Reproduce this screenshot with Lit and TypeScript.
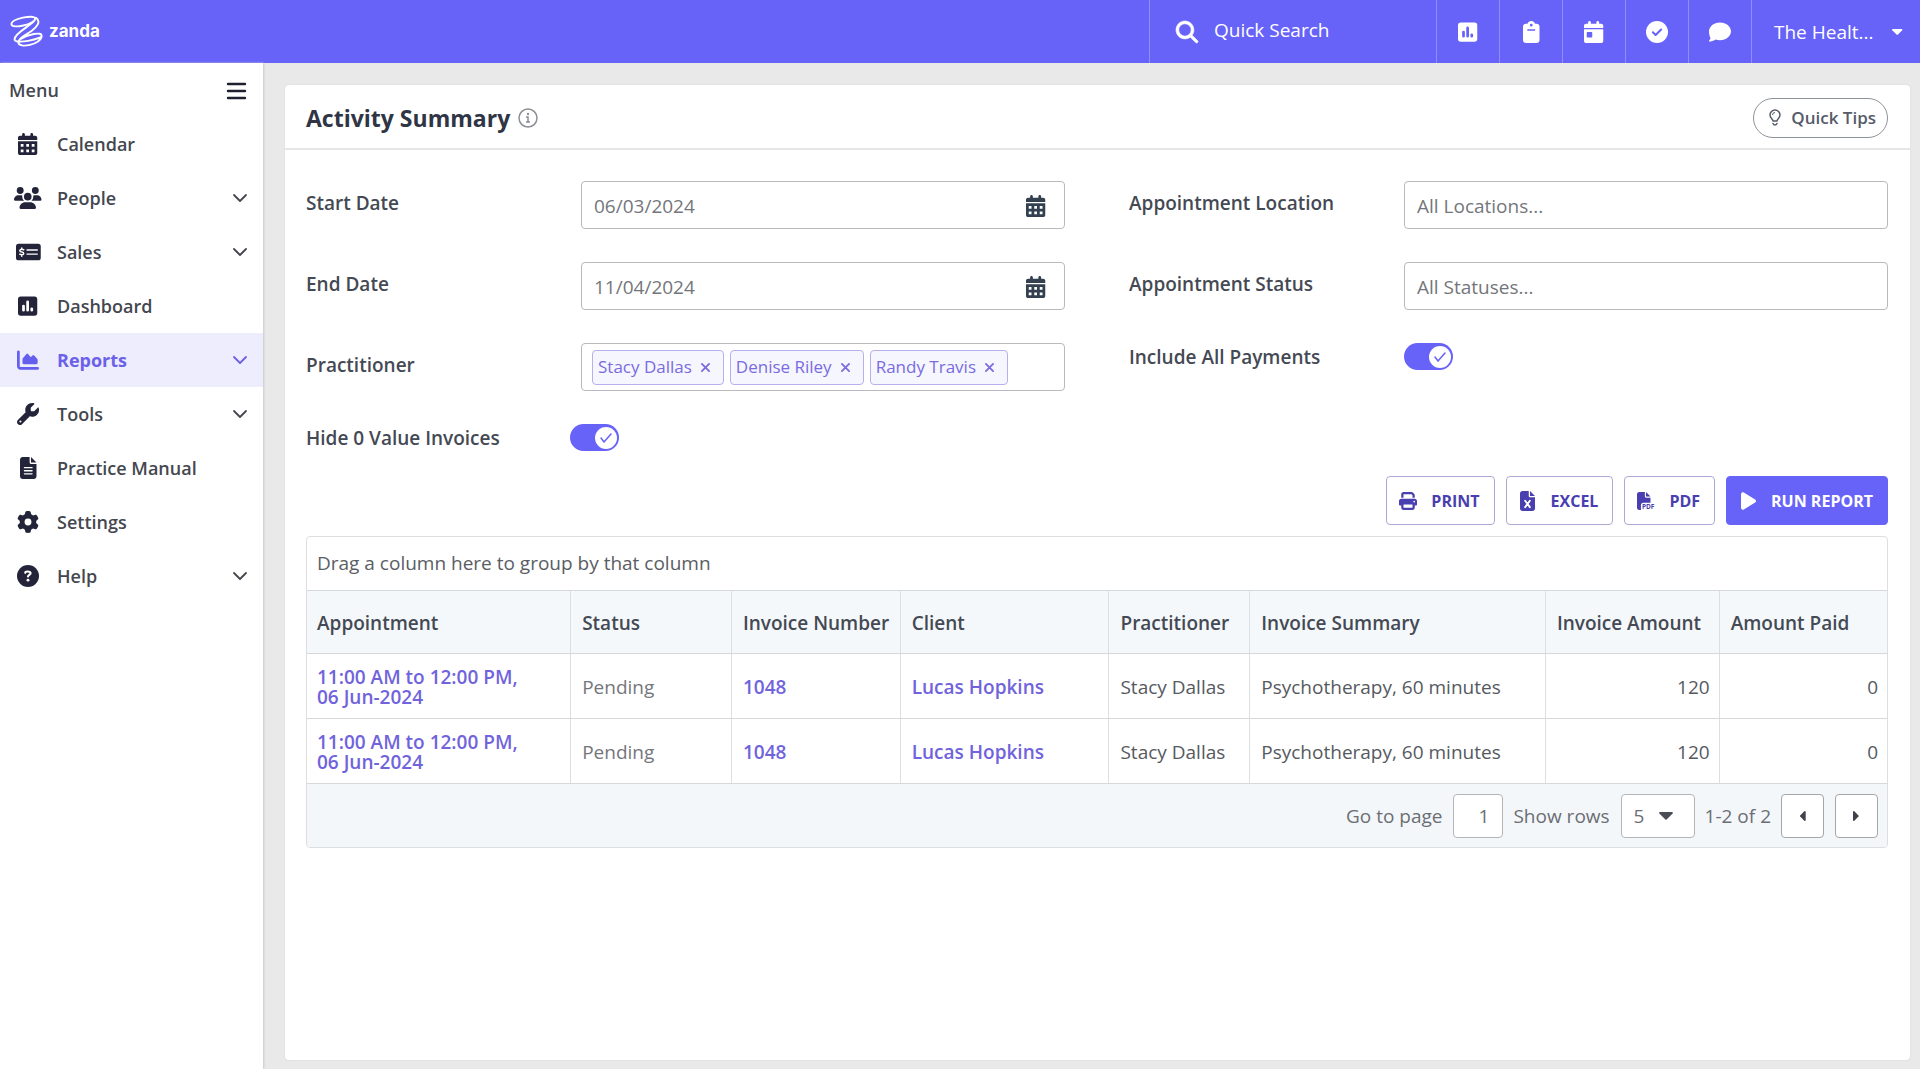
import { LitElement, html, css, svg, TemplateResult } from "lit";
import { customElement, property } from "lit/decorators.js";

const calendar = (holes: boolean) => svg`
  <path fill-rule="evenodd" d="M128 0c17.700 0 32 14.300 32 32V64H288V32c0-17.700 14.300-32 32-32s32 14.300 32 32V64h48c26.500 0 48 21.500 48 48v48H0V112C0 85.500 21.500 64 48 64H96V32c0-17.700 14.300-32 32-32zM0 192H448V464c0 26.500-21.500 48-48 48H48c-26.500 0-48-21.500-48-48V192z${
    holes
      ? "M64 256h64v64H64zM192 256h64v64h-64zM320 256h64v64h-64zM64 384h64v64H64zM192 384h64v64h-64zM320 384h64v64h-64z"
      : "M80 256h96a16 16 0 0 1 16 16v96a16 16 0 0 1-16 16H80a16 16 0 0 1-16-16v-96a16 16 0 0 1 16-16z"
  }"/>`;

interface Glyph {
  box: string;
  body: TemplateResult<2>;
}

const glyphs: Record<string, Glyph> = {
  calendar: { box: "0 0 448 512", body: calendar(true) },
  calendarDay: { box: "0 0 448 512", body: calendar(false) },
  people: {
    box: "0 0 640 512",
    body: svg`<circle cx="144" cy="80" r="80"/><circle cx="496" cy="80" r="80"/><circle cx="320" cy="224" r="88"/>
      <path d="M0 298.700C0 239.800 47.800 192 106.700 192h42.700c15.900 0 31 3.500 44.600 9.700-1.300 7.200-1.900 14.700-1.900 22.300 0 38.200 16.800 72.500 43.300 96H21.300C9.600 320 0 310.400 0 298.700zM640 298.700C640 239.800 592.200 192 533.300 192h-42.700c-15.900 0-31 3.500-44.600 9.700 1.300 7.200 1.900 14.700 1.900 22.300 0 38.200-16.800 72.500-43.300 96h214c11.800 0 21.400-9.600 21.400-21.300zM128 485.300C128 411.700 187.700 352 261.300 352h117.400C452.300 352 512 411.700 512 485.300c0 14.700-11.900 26.700-26.700 26.700H154.700c-14.800 0-26.700-11.900-26.700-26.700z"/>`,
  },
  sales: {
    box: "0 0 576 512",
    body: svg`<rect y="64" width="576" height="384" rx="60"/>
      <g fill="none" stroke="#fff" stroke-width="32" stroke-linecap="round"><path d="M256 208h240M256 304h240"/>
      <path stroke-width="34" d="M180 204c-50-20-92-8-92 22 0 42 92 22 92 62 0 34-50 38-94 18M134 160v32M134 322v32"/></g>`,
  },
  chart: {
    box: "0 0 448 512",
    body: svg`<path fill-rule="evenodd" d="M64 32h320a64 64 0 0 1 64 64v320a64 64 0 0 1-64 64H64a64 64 0 0 1-64-64V96a64 64 0 0 1 64-64zM96 256a32 32 0 0 1 64 0v96a32 32 0 0 1-64 0zM192 160a32 32 0 0 1 64 0v192a32 32 0 0 1-64 0zM288 320a32 32 0 0 1 64 0v32a32 32 0 0 1-64 0z"/>`,
  },
  area: {
    box: "0 0 512 512",
    body: svg`<path d="M64 64c0-17.700-14.300-32-32-32S0 46.300 0 64V400c0 44.200 35.800 80 80 80H480c17.700 0 32-14.300 32-32s-14.300-32-32-32H80c-8.800 0-16-7.200-16-16V64zm96 288H448c17.700 0 32-14.300 32-32V251.800c0-7.600-2.700-15-7.700-20.800l-65.800-76.800c-12.100-14.200-33.700-15-46.900-1.800l-21 21c-10 10-26.400 9.200-35.400-1.600l-39.200-47c-12.600-15.100-35.700-15.400-48.700-.6L135.900 215c-5.100 5.800-7.900 13.300-7.900 21.100v84c0 17.700 14.300 32 32 32z"/>`,
  },
  wrench: {
    box: "0 0 512 512",
    body: svg`<path d="M352 320c88.400 0 160-71.600 160-160c0-15.300-2.200-30.100-6.200-44.200c-3.100-10.800-16.400-13.200-24.300-5.300l-76.800 76.800c-3 3-7.100 4.700-11.300 4.700H336c-8.800 0-16-7.200-16-16V118.600c0-4.200 1.700-8.300 4.700-11.300l76.800-76.800c7.900-7.900 5.400-21.200-5.300-24.300C382.100 2.200 367.300 0 352 0C263.600 0 192 71.600 192 160c0 19.100 3.400 37.500 9.500 54.500L19.900 396.100C7.200 408.800 0 426.100 0 444.100C0 481.600 30.400 512 67.900 512c18 0 35.300-7.200 48-19.900L297.500 310.500c17 6.200 35.400 9.500 54.500 9.500zM80 408a24 24 0 1 1 0 48 24 24 0 1 1 0-48z"/>`,
  },
  file: {
    box: "0 0 384 512",
    body: svg`<path d="M64 0C28.700 0 0 28.700 0 64V448c0 35.300 28.700 64 64 64H320c35.300 0 64-28.700 64-64V160H256c-17.700 0-32-14.300-32-32V0H64zM256 0V128H384L256 0z"/>
      <path d="M104 248h176M104 320h176M104 392h176" stroke="#fff" stroke-width="32" stroke-linecap="round"/>`,
  },
  gear: {
    box: "0 0 512 512",
    body: svg`<path d="M495.900 166.600c3.200 8.700 .5 18.400-6.400 24.600l-43.300 39.400c1.100 8.300 1.700 16.800 1.700 25.400s-.6 17.100-1.700 25.400l43.300 39.400c6.900 6.200 9.600 15.900 6.400 24.600c-4.400 11.900-9.700 23.300-15.800 34.300l-4.700 8.100c-6.600 11-14 21.400-22.100 31.200c-5.900 7.200-15.700 9.600-24.500 6.800l-55.700-17.700c-13.400 10.300-28.200 18.900-44 25.400l-12.500 57.100c-2 9.100-9 16.300-18.200 17.800c-13.800 2.300-28 3.500-42.500 3.500s-28.700-1.200-42.500-3.500c-9.200-1.500-16.200-8.700-18.200-17.800l-12.500-57.100c-15.800-6.500-30.600-15.100-44-25.400L83.100 425.900c-8.800 2.800-18.600 .3-24.500-6.800c-8.100-9.800-15.500-20.200-22.100-31.200l-4.700-8.100c-6.100-11-11.400-22.400-15.800-34.300c-3.200-8.700-.5-18.400 6.400-24.600l43.300-39.400C64.600 273.100 64 264.600 64 256s.6-17.100 1.700-25.400L22.400 191.200c-6.900-6.200-9.600-15.900-6.400-24.600c4.400-11.900 9.700-23.300 15.800-34.300l4.700-8.100c6.600-11 14-21.400 22.100-31.200c5.900-7.200 15.700-9.600 24.500-6.800l55.700 17.700c13.400-10.300 28.200-18.900 44-25.400l12.500-57.100c2-9.100 9-16.300 18.200-17.800C227.300 1.200 241.500 0 256 0s28.700 1.200 42.500 3.500c9.200 1.500 16.200 8.700 18.200 17.800l12.500 57.100c15.800 6.500 30.600 15.100 44 25.400l55.700-17.700c8.800-2.800 18.600-.3 24.500 6.800c8.100 9.800 15.500 20.200 22.100 31.200l4.700 8.100c6.100 11 11.400 22.400 15.800 34.300zM256 336a80 80 0 1 0 0-160 80 80 0 1 0 0 160z"/>`,
  },
  help: {
    box: "0 0 512 512",
    body: svg`<circle cx="256" cy="256" r="256"/><path d="M192 182c0-40 110-42 124 0 12 48-60 46-60 86" fill="none" stroke="#fff" stroke-width="50" stroke-linecap="round"/><circle cx="256" cy="352" r="33" fill="#fff"/>`,
  },
  search: {
    box: "0 0 512 512",
    body: svg`<path d="M416 208c0 45.900-14.900 88.300-40 122.700L502.600 457.400c12.500 12.500 12.500 32.800 0 45.300s-32.800 12.500-45.300 0L330.700 376c-34.400 25.200-76.800 40-122.700 40C93.100 416 0 322.900 0 208S93.100 0 208 0S416 93.100 416 208zM208 352a144 144 0 1 0 0-288 144 144 0 1 0 0 288z" stroke="currentColor" stroke-width="14"/>`,
  },
  clipboard: {
    box: "0 0 384 512",
    body: svg`<path fill-rule="evenodd" d="M192 0c-41.800 0-77.400 26.700-90.500 64H64C28.700 64 0 92.700 0 128V448c0 35.300 28.700 64 64 64H320c35.300 0 64-28.700 64-64V128c0-35.300-28.700-64-64-64H282.500C269.400 26.700 233.800 0 192 0zm0 64a32 32 0 1 1 0 64 32 32 0 1 1 0-64zM112 192H272a16 16 0 0 1 0 32H112a16 16 0 0 1 0-32z"/>`,
  },
  check: {
    box: "0 0 512 512",
    body: svg`<circle cx="256" cy="256" r="256"/><path d="M160 262l64 64 128-128" fill="none" stroke="#6762f8" stroke-width="46" stroke-linecap="round" stroke-linejoin="round"/>`,
  },
  comment: {
    box: "0 0 512 512",
    body: svg`<path d="M512 240c0 114.900-114.600 208-256 208c-37.100 0-72.300-6.400-104.100-17.900c-11.900 8.700-31.300 20.600-54.300 30.600C73.600 471.100 44.700 480 16 480c-6.500 0-12.300-3.900-14.800-9.900c-2.500-6-1.100-12.800 3.400-17.400c.4-.4 23.600-25.400 31.800-50.800C12.700 351.500 0 313 0 240C0 125.100 114.600 32 256 32s256 93.100 256 208z"/>`,
  },
  print: {
    box: "0 0 512 512",
    body: svg`<path fill-rule="evenodd" d="M128 0C92.700 0 64 28.700 64 64v96h64V64H354.700L384 93.300V160h64V93.300c0-17-6.700-33.300-18.700-45.300L400 18.700C388 6.700 371.700 0 354.700 0H128zM384 352v32 64H128V384 352zM448 384h32c17.700 0 32-14.300 32-32V256c0-35.300-28.700-64-64-64H64c-35.300 0-64 28.700-64 64v96c0 17.700 14.300 32 32 32H64v64c0 35.300 28.700 64 64 64H384c35.300 0 64-28.700 64-64V384zM432 248a24 24 0 1 1 0 48 24 24 0 1 1 0-48z"/>`,
  },
  excel: {
    box: "0 0 384 512",
    body: svg`<path d="M64 0C28.700 0 0 28.700 0 64V448c0 35.300 28.700 64 64 64H320c35.300 0 64-28.700 64-64V160H256c-17.700 0-32-14.300-32-32V0H64zM256 0V128H384L256 0z"/>
      <path d="M132 250l120 164M252 250L132 414" stroke="#fff" stroke-width="48" stroke-linecap="round"/>`,
  },
  pdf: {
    box: "0 0 512 512",
    body: svg`<path d="M0 64C0 28.700 28.700 0 64 0H224V128c0 17.700 14.300 32 32 32H384V304H176c-35.300 0-64 28.700-64 64V512H64c-35.300 0-64-28.700-64-64V64zm384 64H256V0L384 128z"/>
      <text x="140" y="492" font-family="Open Sans, sans-serif" font-weight="700" font-size="186">PDF</text>`,
  },
  play: { box: "0 0 384 512", body: svg`<path d="M73 39c-14.800-9.100-33.400-9.400-48.500-.9S0 62.600 0 80V432c0 17.400 9.400 33.400 24.500 41.900s33.700 8.100 48.500-.9L361 297c14.300-8.700 23-24.200 23-41s-8.700-32.200-23-41L73 39z"/>` },
  info: {
    box: "0 0 20 20",
    body: svg`<circle cx="10" cy="10" r="9" fill="none" stroke="currentColor" stroke-width="1.500"/><circle cx="10" cy="6" r="1.200"/><path d="M8 9h2v5M8 14h4" fill="none" stroke="currentColor" stroke-width="1.500"/>`,
  },
  bulb: {
    box: "0 0 12 17",
    body: svg`<path d="M4 12C4 10 1 9 1 6a5 5 0 0 1 10 0c0 3-3 4-3 6zM4 14.500c1 2 3 2 4 0" fill="none" stroke="currentColor" stroke-width="1.500" stroke-linecap="round" stroke-linejoin="round"/><path d="M3.500 6A2.500 2.500 0 0 1 6 3.500" fill="none" stroke="currentColor" stroke-width="1"/>`,
  },
  chevron: { box: "0 0 14 8", body: svg`<path d="M1 1l6 6 6-6" fill="none" stroke="currentColor" stroke-width="1.800" stroke-linecap="round" stroke-linejoin="round"/>` },
  bars: { box: "0 0 19 17", body: svg`<path d="M1 2h17M1 9h17M1 16h17" fill="none" stroke="currentColor" stroke-width="2.400" stroke-linecap="round"/>` },
  down: { box: "0 0 14 8", body: svg`<path d="M1 0h12a1 1 0 0 1 .6 1.600l-6 6a1 1 0 0 1-1.200 0l-6-6A1 1 0 0 1 1 0z"/>` },
  left: { box: "0 0 8 12", body: svg`<path d="M8 1v10a1 1 0 0 1-1.600.6l-5-5a1 1 0 0 1 0-1.200l5-5A1 1 0 0 1 8 1z"/>` },
  right: { box: "0 0 8 12", body: svg`<path d="M0 1v10a1 1 0 0 0 1.600.6l5-5a1 1 0 0 0 0-1.200l-5-5A1 1 0 0 0 0 1z"/>` },
  close: { box: "0 0 10 10", body: svg`<path d="M1 1l8 8M9 1L1 9" stroke="currentColor" stroke-width="2" stroke-linecap="round"/>` },
};

@customElement("ui-icon")
export class UiIcon extends LitElement {
  @property() name = "";
  static styles = css`
    :host { display: inline-flex; flex: none; justify-content: center; align-items: center; height: 22px; }
    svg { height: 100%; max-width: 100%; fill: currentColor; display: block; overflow: visible; }
  `;
  render() {
    const g = glyphs[this.name];
    return html`<svg viewBox=${g.box} aria-hidden="true">${g.body}</svg>`;
  }
}

const menu = [
  { label: "Calendar", icon: "calendar" },
  { label: "People", icon: "people", open: true },
  { label: "Sales", icon: "sales", open: true },
  { label: "Dashboard", icon: "chart" },
  { label: "Reports", icon: "area", open: true, active: true },
  { label: "Tools", icon: "wrench", open: true },
  { label: "Practice Manual", icon: "file" },
  { label: "Settings", icon: "gear" },
  { label: "Help", icon: "help", open: true },
];

const shortcuts = [
  { label: "Dashboard", icon: "chart" },
  { label: "Notes", icon: "clipboard" },
  { label: "Calendar", icon: "calendarDay" },
  { label: "Tasks", icon: "check" },
  { label: "Messages", icon: "comment" },
];

const columns = [
  { label: "Appointment", width: 264 },
  { label: "Status", width: 161 },
  { label: "Invoice Number", width: 169 },
  { label: "Client", width: 209 },
  { label: "Practitioner", width: 141 },
  { label: "Invoice Summary", width: 296 },
  { label: "Invoice Amount", width: 174 },
  { label: "Amount Paid", width: 168 },
];
const totalWidth = columns.reduce((sum, c) => sum + c.width, 0);

const rows = [0, 1].map(() => ({
  time: "11:00 AM to 12:00 PM,",
  date: "06 Jun-2024",
  status: "Pending",
  invoice: "1048",
  client: "Lucas Hopkins",
  practitioner: "Stacy Dallas",
  summary: "Psychotherapy, 60 minutes",
  amount: 120,
  paid: 0,
}));

@customElement("app-root")
export class AppRoot extends LitElement {
  static styles = css`
    * { box-sizing: border-box; }
    :host {
      display: flex; flex-direction: column; min-height: 100vh;
      font-family: "Open Sans", "Noto Sans", sans-serif; font-size: 19px; line-height: 24px;
      color: #4b4f58; background: #e9e9e9;
    }
    button, input, select { font: inherit; color: inherit; }
    button { cursor: pointer; background: none; border: 0; padding: 0; }
    a { text-decoration: none; color: inherit; }

    .topbar { display: flex; height: 63px; background: #6762f8; color: #fff; }
    .brand { display: flex; align-items: center; gap: 6px; padding: 0 0 2px 10px; margin-right: auto; font: 700 17px/24px Inter, sans-serif; }
    .brand svg { width: 33px; height: 34px; }
    .search { display: flex; align-items: center; gap: 16px; width: 287px; padding-left: 26px; border-left: 1px solid #918df9; }
    .search input { flex: 1; min-width: 0; border: 0; outline: 0; padding: 0 0 4px; background: none; }
    .search input::placeholder { color: #fff; opacity: 1; }
    .shortcut { width: 63px; border-left: 1px solid #918df9; display: flex; align-items: center; justify-content: center; }
    .account { width: 169px; border-left: 1px solid #918df9; display: flex; align-items: center; justify-content: space-between; padding: 0 18px 0 22px; }
    .account ui-icon { height: 6px; }

    .body { flex: 1; display: flex; }
    .sidebar { width: 263px; flex: none; background: #fff; box-shadow: 1px 0 2px #c9c9c9; }
    .menu-head { display: flex; align-items: center; justify-content: space-between; height: 54px; padding: 0 17px 0 9px; font-size: 18px; font-weight: 600; color: #44474f; }
    .menu-head button { display: flex; }
    .menu-head ui-icon { height: 17px; color: #1e2030; }
    .item { display: flex; align-items: center; height: 54px; padding: 0 16px 0 14px; font-size: 18px; font-weight: 600; color: #44474f; }
    .item ui-icon.lead { width: 28px; margin-right: 15px; color: #23243a; }
    .item .name { flex: 1; }
    .item ui-icon.chev { height: 8px; }
    .item.active { background: #eeedfe; color: #6b61e8; font-weight: 700; }
    .item.active ui-icon.lead { color: #655ff0; }

    .main { flex: 1; min-width: 0; display: flex; padding: 22px 10px 9px 22px; }
    .card { flex: 1; min-width: 0; background: #fff; border-radius: 4px; box-shadow: 0 0 2px #d4d4d4; }
    .card-head { display: flex; align-items: center; gap: 8px; height: 65px; padding: 2px 22px 0 21px; border-bottom: 2px solid #e6e6e8; }
    h1 { margin: 0; font-size: 23px; line-height: 32px; font-weight: 700; color: #2f3545; }
    .info { display: flex; color: #8b8e94; margin-right: auto; }
    .info ui-icon { height: 20px; }
    .tips { display: flex; align-items: center; gap: 10px; height: 40px; padding: 0 11px 0 15px; border: 1px solid #8d9299; border-radius: 20px; font-size: 17px; font-weight: 600; color: #555b68; }
    .tips ui-icon { height: 17px; }

    .content { padding: 31px 22px 0 21px; }
    .filters { display: grid; grid-template-columns: 1fr 1fr; column-gap: 64px; }
    .filters .col { display: flex; flex-direction: column; gap: 33px; }
    .field, .toggle-field { display: grid; grid-template-columns: 275px 1fr; }
    .field label, .toggle-field label { font-weight: 600; color: #444954; }
    .field label { padding-top: 10px; }
    .toggle-field { align-items: center; }
    .toggle-field.tight { grid-template-columns: 264px 1fr; }
    .box { display: flex; align-items: center; height: 48px; border: 1px solid #b9b9be; border-radius: 4px; background: #fff; color: #74767b; }
    .box input { flex: 1; min-width: 0; width: 100%; height: 100%; border: 0; outline: 0; background: none; padding: 2px 12px 0; }
    .box input::placeholder { color: #74767b; opacity: 1; }
    .box .pick { display: flex; padding: 2px 19px 0 0; color: #33404f; }
    .tags { padding: 0 10px; gap: 6px; }
    .tags input { padding: 0; }
    .tag { display: flex; align-items: center; flex: none; gap: 9px; height: 35px; padding: 0 13px 0 5px; border: 1px solid #b6b0ee; border-radius: 4px; background: #f5f6fe; color: #7a6be0; font-size: 17px; }
    .tag ui-icon { height: 9px; }
    .tag button { display: flex; }
    .switch { appearance: none; margin: 0; width: 49px; height: 27px; border-radius: 14px; background: #6762f8; display: flex; align-items: center; justify-content: flex-end; padding: 0 2px; cursor: pointer; }
    .switch::before { content: ""; width: 22px; height: 22px; border-radius: 50%; background: #fff; }
    .switch-wrap { display: grid; width: 49px; }
    .switch-wrap > * { grid-area: 1 / 1; }
    .switch-wrap svg { width: 12px; height: 10px; justify-self: end; align-self: center; margin-right: 7px; pointer-events: none; }

    .actions { display: flex; justify-content: flex-end; gap: 11px; margin-top: 25px; }
    .btn { display: flex; align-items: center; gap: 14px; height: 49px; padding: 0 14px 0 12px; border: 1px solid #ada9d6; border-radius: 4px; background: #fff; color: #4a3fb0; font-size: 16px; font-weight: 700; }
    .btn ui-icon { width: 18px; height: 20px; }
    .btn.primary { border-color: #6762f8; background: #6762f8; color: #fff; }

    .grid { margin-top: 11px; border: 1px solid #dcdee1; border-radius: 4px; overflow: hidden; }
    .group { height: 54px; line-height: 53px; padding-left: 10px; border-bottom: 1px solid #d6d8dc; color: #5a5d64; }
    table { width: 100%; border-collapse: collapse; table-layout: fixed; }
    th, td { text-align: left; padding: 2px 9px 0 11px; border-left: 1px solid #dcdee1; border-bottom: 1px solid #d6d8dc; white-space: nowrap; line-height: 20px; }
    th:first-child, td:first-child { border-left: 0; padding-left: 10px; }
    th { height: 62px; background: #f4f8fa; font-weight: 600; color: #444954; }
    td { height: 65px; color: #565960; }
    td a { color: #7063dc; font-weight: 600; }
    td.muted { color: #74767b; }
    td.num { text-align: right; }
    .pager { display: flex; align-items: center; justify-content: flex-end; gap: 10px; height: 63px; padding: 1px 9px 0; background: #f4f7fa; color: #6b6e74; }
    .pager label { display: flex; align-items: center; gap: 11px; }
    .pager input { width: 50px; height: 44px; padding: 0 13px; text-align: right; border: 1px solid #b5b6ba; border-radius: 4px; background: #fff; }
    .pick-rows { display: grid; align-items: center; }
    .pick-rows > * { grid-area: 1 / 1; }
    .pick-rows select { appearance: none; width: 74px; height: 44px; padding: 0 12px; border: 1px solid #b5b6ba; border-radius: 4px; background: #fff; }
    .pick-rows ui-icon { justify-self: end; height: 8px; margin-right: 22px; color: #4a4d55; pointer-events: none; }
    .page { display: flex; align-items: center; justify-content: center; width: 43px; height: 44px; border: 1px solid #a5a6aa; border-radius: 4px; background: #fff; color: #3f424a; }
    .page + .page { margin-left: 1px; }
    .page ui-icon { height: 10px; }
  `;

  private toggle(id: string) {
    return html`<span class="switch-wrap">
      <input class="switch" type="checkbox" role="switch" id=${id} checked />
      <svg viewBox="0 0 12 10" aria-hidden="true"><path d="M1 5l3 4 7-8" fill="none" stroke="#6762f8" stroke-width="1.500" stroke-linecap="round" /></svg>
    </span>`;
  }

  private dateField(id: string, label: string, value: string) {
    return html`<div class="field">
      <label for=${id}>${label}</label>
      <div class="box">
        <input id=${id} type="text" .value=${value} />
        <button class="pick" aria-label="Open calendar"><ui-icon name="calendar"></ui-icon></button>
      </div>
    </div>`;
  }

  private textField(id: string, label: string, placeholder: string) {
    return html`<div class="field">
      <label for=${id}>${label}</label>
      <div class="box"><input id=${id} type="text" placeholder=${placeholder} /></div>
    </div>`;
  }

  render() {
    return html`
      <header class="topbar">
        <a class="brand" href="#">
          <svg viewBox="28 38 104 108" fill="none" stroke="#fff" stroke-width="6" stroke-linecap="round" aria-hidden="true">
            <path d="M108 52C104 38 32 54 32 70C32 88 108 70 108 52M106 58C96 74 42 98 42 118C42 136 128 118 128 106C128 94 84 102 60 118M110 50C128 62 112 80 96 92C80 104 56 112 54 128C54 150 128 134 128 108" />
          </svg>
          <span>zanda</span>
        </a>
        <label class="search"><ui-icon name="search"></ui-icon><input type="search" placeholder="Quick Search" aria-label="Quick Search" /></label>
        ${shortcuts.map((s) => html`<button class="shortcut" aria-label=${s.label}><ui-icon name=${s.icon}></ui-icon></button>`)}
        <button class="account"><span>The Healt...</span><ui-icon name="down"></ui-icon></button>
      </header>
      <div class="body">
        <nav class="sidebar">
          <div class="menu-head"><span>Menu</span><button aria-label="Toggle menu"><ui-icon name="bars"></ui-icon></button></div>
          ${menu.map(
            (m) => html`<a class="item ${m.active ? "active" : ""}" href="#">
              <ui-icon class="lead" name=${m.icon}></ui-icon><span class="name">${m.label}</span>
              ${m.open ? html`<ui-icon class="chev" name="chevron"></ui-icon>` : null}
            </a>`
          )}
        </nav>
        <main class="main">
          <section class="card">
            <div class="card-head">
              <h1>Activity Summary</h1>
              <button class="info" aria-label="About this report"><ui-icon name="info"></ui-icon></button>
              <button class="tips"><ui-icon name="bulb"></ui-icon>Quick Tips</button>
            </div>
            <div class="content">
              <div class="filters">
                <div class="col">
                  ${this.dateField("start", "Start Date", "06/03/2024")}
                  ${this.dateField("end", "End Date", "11/04/2024")}
                  <div class="field">
                    <label for="practitioner">Practitioner</label>
                    <div class="box tags">
                      ${["Stacy Dallas", "Denise Riley", "Randy Travis"].map(
                        (n) => html`<span class="tag">${n}<button aria-label="Remove ${n}"><ui-icon name="close"></ui-icon></button></span>`
                      )}
                      <input id="practitioner" type="text" />
                    </div>
                  </div>
                  <div class="toggle-field tight"><label for="hide">Hide 0 Value Invoices</label>${this.toggle("hide")}</div>
                </div>
                <div class="col">
                  ${this.textField("location", "Appointment Location", "All Locations...")}
                  ${this.textField("status", "Appointment Status", "All Statuses...")}
                  <div class="toggle-field"><label for="payments">Include All Payments</label>${this.toggle("payments")}</div>
                </div>
              </div>
              <div class="actions">
                <button class="btn"><ui-icon name="print"></ui-icon>PRINT</button>
                <button class="btn"><ui-icon name="excel"></ui-icon>EXCEL</button>
                <button class="btn"><ui-icon name="pdf"></ui-icon>PDF</button>
                <button class="btn primary"><ui-icon name="play"></ui-icon>RUN REPORT</button>
              </div>
              <div class="grid">
                <div class="group">Drag a column here to group by that column</div>
                <table>
                  <colgroup>${columns.map((c) => html`<col style="width:${(c.width / totalWidth) * 100}%" />`)}</colgroup>
                  <thead><tr>${columns.map((c) => html`<th scope="col">${c.label}</th>`)}</tr></thead>
                  <tbody>
                    ${rows.map(
                      (r) => html`<tr>
                        <td><a href="#">${r.time}<br />${r.date}</a></td>
                        <td class="muted">${r.status}</td>
                        <td><a href="#">${r.invoice}</a></td>
                        <td><a href="#">${r.client}</a></td>
                        <td>${r.practitioner}</td>
                        <td>${r.summary}</td>
                        <td class="num">${r.amount}</td>
                        <td class="num">${r.paid}</td>
                      </tr>`
                    )}
                  </tbody>
                </table>
                <div class="pager">
                  <label>Go to page <input type="text" .value=${"1"} /></label>
                  <label>Show rows <span class="pick-rows"><select><option>5</option></select><ui-icon name="down"></ui-icon></span></label>
                  <span>1-2 of 2</span>
                  <button class="page" aria-label="Previous page"><ui-icon name="left"></ui-icon></button>
                  <button class="page" aria-label="Next page"><ui-icon name="right"></ui-icon></button>
                </div>
              </div>
            </div>
          </section>
        </main>
      </div>
    `;
  }
}
